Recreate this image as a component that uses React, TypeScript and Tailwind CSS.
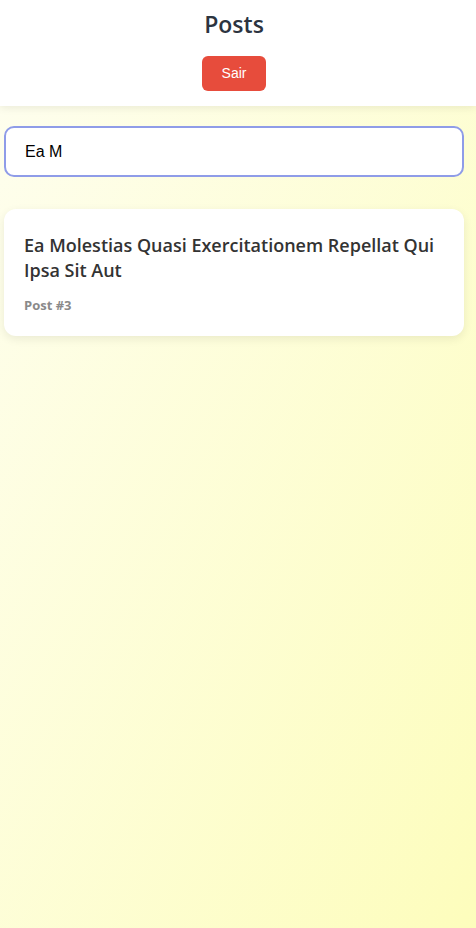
const App = () => (
  <div className="min-h-screen bg-linear-to-br from-[#fefef0] to-[#fdfdbc] font-['Open_Sans',sans-serif]">
    <header className="flex flex-col items-center bg-white pt-[7px] pr-2 pb-[15px] shadow-[0_2px_8px_rgba(0,0,0,0.08)]">
      <h1 className="text-[23px] font-semibold leading-[34px] text-[#2c3440]">Posts</h1>
      <button className="mt-[15px] h-[35px] w-[64px] rounded-[6px] bg-[#e74c3c] font-['Liberation_Sans',sans-serif] text-[14px] text-white">
        Sair
      </button>
    </header>

    <main className="flex flex-col pl-1 pr-3 pt-5">
      <input
        defaultValue="Ea M"
        className="h-[51px] w-full rounded-[10px] border-2 border-[#8f9ce8] bg-white px-[19px] font-['Liberation_Sans',sans-serif] text-[16px] text-black outline-none"
      />

      <div className="mt-8 rounded-[12px] bg-white px-5 pt-[24px] pb-[20px] shadow-[0_3px_10px_rgba(0,0,0,0.08)]">
        <h2 className="text-[18px] font-semibold leading-[25px] text-[#333]">
          Ea Molestias Quasi Exercitationem Repellat Qui Ipsa Sit Aut
        </h2>
        <p className="mt-[13px] text-[13px] font-bold text-[#8a8a8a]">Post #3</p>
      </div>
    </main>
  </div>
)

export default App
